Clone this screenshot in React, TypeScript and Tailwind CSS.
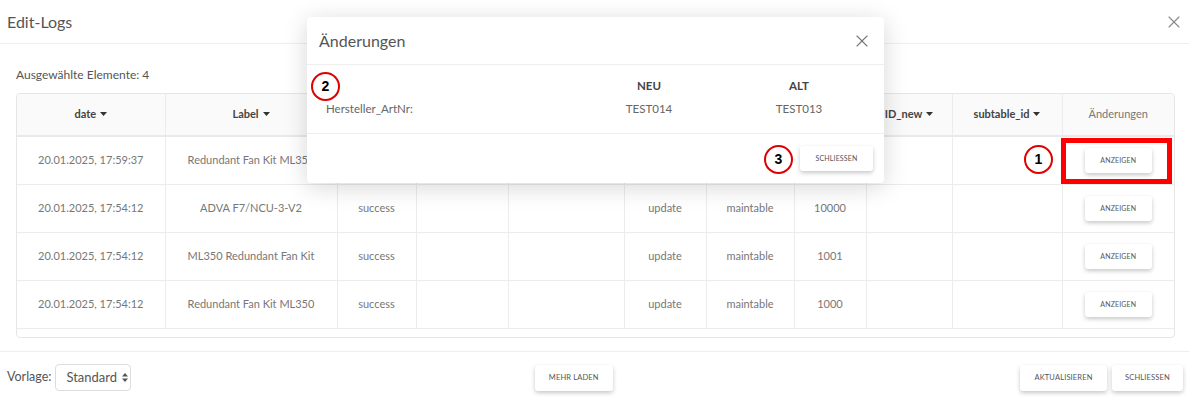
import { X } from "lucide-react"

const rows = [
  { date: "20.01.2025, 17:59:37", label: "Redundant Fan Kit ML350", id: "", status: "", action: "", table: "" },
  { date: "20.01.2025, 17:54:12", label: "ADVA F7/NCU-3-V2", id: "10000", status: "success", action: "update", table: "maintable" },
  { date: "20.01.2025, 17:54:12", label: "ML350 Redundant Fan Kit", id: "1001", status: "success", action: "update", table: "maintable" },
  { date: "20.01.2025, 17:54:12", label: "Redundant Fan Kit ML350", id: "1000", status: "success", action: "update", table: "maintable" },
]

// columns 3-8 sit under the modal, their titles are not visible
const cols = [
  { key: "date", title: "date", w: "w-[148px]" },
  { key: "label", title: "Label", w: "w-[172px]" },
  { key: "status", title: "", w: "w-[79px]" },
  { key: "old", title: "", w: "w-[92px]" },
  { key: "new", title: "", w: "w-[116px]" },
  { key: "action", title: "", w: "w-[82px]" },
  { key: "table", title: "", w: "w-[88px]" },
  { key: "id", title: "", w: "w-[72px]" },
  { key: "idnew", title: "ID_new", w: "w-[86px]" },
  { key: "sub", title: "subtable_id", w: "w-[110px]" },
]

function Caret() {
  return (
    <svg width="7" height="4" viewBox="0 0 7 4" className="inline-block ml-[4px] mb-[2px]">
      <path d="M0 0h7L3.5 4z" fill="#333" />
    </svg>
  )
}

function Btn({ children, className = "" }: { children: React.ReactNode; className?: string }) {
  return (
    <button
      type="button"
      className={`bg-white rounded-[3px] shadow-[0_2px_4px_rgba(0,0,0,0.22)] text-[#555] text-[7.5px] tracking-[0.02em] uppercase flex items-center justify-center ${className}`}
    >
      {children}
    </button>
  )
}

function Mark({ n, className }: { n: string; className: string }) {
  return (
    <div
      className={`absolute w-[29px] h-[29px] rounded-full border-[2.5px] border-[#e00000] bg-white flex items-center justify-center text-[14px] font-bold text-black font-['Liberation_Sans',sans-serif] ${className}`}
    >
      {n}
    </div>
  )
}

export default function App() {
  return (
    <div className="relative w-[1189px] h-[397px] overflow-hidden bg-white font-['Lato',sans-serif] text-[#666]">
      {/* Dialog header */}
      <div className="h-[44px] flex items-center justify-between pl-[7px] pr-[5px] border-b border-[#eeeeee]">
        <span className="text-[16px] text-[#555]">Edit-Logs</span>
        <X className="w-[20px] h-[20px] text-[#888]" strokeWidth={1.3} />
      </div>

      {/* Dialog body */}
      <div className="h-[308px] px-[16px] pt-[22px] border-b border-[#eeeeee]">
        <div className="text-[12px] text-[#555] leading-[18px] mb-[9px]">Ausgewählte Elemente: 4</div>
        <div className="w-[1159px] h-[245px] border border-[#e6e6e6] rounded-[4px] overflow-hidden">
          <table className="table-fixed border-collapse w-full text-[11px]">
            <thead>
              <tr className="h-[42px] bg-[#fafafa] border-b-2 border-[#e9e9e9]">
                {cols.map((c) => (
                  <th key={c.key} className={`${c.w} border-r border-[#ececec] font-bold text-[#444] text-center`}>
                    {c.title}
                    {c.title && <Caret />}
                  </th>
                ))}
                <th className="font-normal text-[#777] text-center">Änderungen</th>
              </tr>
            </thead>
            <tbody>
              {rows.map((r, i) => (
                <tr key={i} className="h-[48px] border-b border-[#ececec] text-center text-[#777]">
                  <td className="border-r border-[#ececec]">{r.date}</td>
                  <td className="border-r border-[#ececec] whitespace-nowrap">{r.label}</td>
                  <td className="border-r border-[#ececec]">{r.status}</td>
                  <td className="border-r border-[#ececec]"></td>
                  <td className="border-r border-[#ececec]"></td>
                  <td className="border-r border-[#ececec]">{r.action}</td>
                  <td className="border-r border-[#ececec]">{r.table}</td>
                  <td className="border-r border-[#ececec]">{r.id}</td>
                  <td className="border-r border-[#ececec]"></td>
                  <td className="border-r border-[#ececec]"></td>
                  <td>
                    <div className="flex justify-center">
                      <Btn className="w-[67px] h-[25px] text-[7px]">Anzeigen</Btn>
                    </div>
                  </td>
                </tr>
              ))}
            </tbody>
          </table>
        </div>
      </div>

      {/* Dialog footer */}
      <div className="flex items-center pt-[12px] pl-[7px] pr-[6px]">
        <span className="text-[12.5px] text-[#555] mr-[4px]">Vorlage:</span>
        <div className="w-[76px] h-[27px] border border-[#dddddd] rounded-[4px] flex items-center pl-[10px] text-[13px] text-[#555]">
          Standard
          <svg width="6" height="9" viewBox="0 0 6 9" className="ml-[5px]">
            <path d="M0 3.5L3 0l3 3.5zM0 5.5L3 9l3-3.5z" fill="#555" />
          </svg>
        </div>
        <div className="flex-1 flex justify-center pr-[4px]">
          <Btn className="w-[78px] h-[26px]">Mehr laden</Btn>
        </div>
        <div className="flex gap-[5px]">
          <Btn className="w-[87px] h-[26px]">Aktualisieren</Btn>
          <Btn className="w-[71px] h-[26px]">Schliessen</Btn>
        </div>
      </div>

      {/* Änderungen modal */}
      <div className="absolute left-[307px] top-[17px] w-[577px] h-[166px] bg-white rounded-[4px] shadow-[0_4px_24px_rgba(0,0,0,0.16)] flex flex-col">
        <div className="h-[48px] flex items-center justify-between pl-[12px] pr-[12px] border-b border-[#eeeeee]">
          <span className="text-[16px] text-[#555]">Änderungen</span>
          <X className="w-[20px] h-[20px] text-[#777]" strokeWidth={1.3} />
        </div>
        <div className="h-[69px] border-b border-[#eeeeee] pl-[19px] pt-[13px]">
          <div className="grid grid-cols-[248px_150px_150px] text-[11.5px] leading-[16px]">
            <div></div>
            <div className="text-center font-bold text-[#444]">NEU</div>
            <div className="text-center font-bold text-[#444]">ALT</div>
            <div className="mt-[7px] text-[#666]">Hersteller_ArtNr:</div>
            <div className="mt-[7px] text-center text-[#666]">TEST014</div>
            <div className="mt-[7px] text-center text-[#666]">TEST013</div>
          </div>
        </div>
        <div className="flex-1 flex items-center justify-end pr-[11px]">
          <Btn className="w-[73px] h-[25px] text-[7px]">Schliessen</Btn>
        </div>
      </div>

      {/* Annotations */}
      <Mark n="2" className="left-[311px] top-[72px]" />
      <Mark n="3" className="left-[764px] top-[145px]" />
      <Mark n="1" className="left-[1024px] top-[145px]" />
      <div className="absolute left-[1061px] top-[138px] w-[111px] h-[46px] border-[5px] border-[#ff0000]" />
    </div>
  )
}
